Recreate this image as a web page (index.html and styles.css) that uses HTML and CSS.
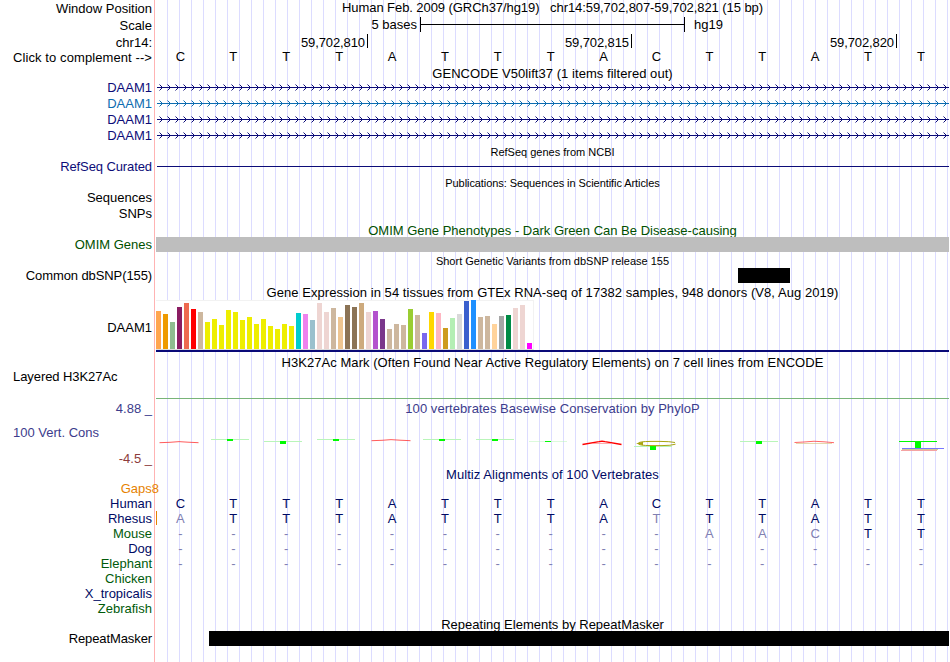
FILE: index.html
```html
<!DOCTYPE html>
<html lang="en">
<head>
<meta charset="utf-8">
<title>Genome Browser</title>
<link rel="stylesheet" href="styles.css">
</head>
<body>
<svg class="defs" width="0" height="0">
  <defs>
    <pattern id="chevDark" x="0" y="0" width="8" height="16" patternUnits="userSpaceOnUse">
      <path class="tip navy" d="M4 6h1v1h-1zM5 7h1v1h-1zM6 8h1v1h-1zM5 9h1v1h-1zM4 10h1v1h-1z"/>
      <path class="tail navy" d="M3 5h1v1h-1zM3 11h1v1h-1z"/>
    </pattern>
    <pattern id="chevBlue" x="0" y="0" width="8" height="16" patternUnits="userSpaceOnUse">
      <path class="tip azure" d="M4 6h1v1h-1zM5 7h1v1h-1zM6 8h1v1h-1zM5 9h1v1h-1zM4 10h1v1h-1z"/>
      <path class="tail azure" d="M3 5h1v1h-1zM3 11h1v1h-1z"/>
    </pattern>
  </defs>
</svg>
<main class="browser">
  <div class="row window"><div class="label">Window Position</div><div class="title tight">Human Feb. 2009 (GRCh37/hg19) &nbsp; chr14:59,702,807-59,702,821 (15 bp)</div></div>
  <div class="row scale"><div class="label">Scale</div>
    <div class="ruler"><span class="bases">5 bases</span><span class="bracket"></span><span>hg19</span></div></div>
  <div class="row coords"><div class="label">chr14:</div>
    <div class="ticks"><span>59,702,810</span><span>59,702,815</span><span>59,702,820</span></div></div>
  <div class="row seq"><div class="label wide">Click to complement --&gt;</div><div class="letters" data-seq="CTTTATTTACTTATT"></div></div>

  <div class="row head gencode"><div class="title loose">GENCODE V50lift37 (1 items filtered out)</div></div>
  <div class="row gene"><div class="label navy">DAAM1</div><svg width="793" height="16"><rect x="1" y="8" width="792" height="1" class="navy"/><rect x="1" width="792" height="16" fill="url(#chevDark)"/></svg></div>
  <div class="row gene"><div class="label azure">DAAM1</div><svg width="793" height="16"><rect x="1" y="8" width="792" height="1" class="azure"/><rect x="1" width="792" height="16" fill="url(#chevBlue)"/></svg></div>
  <div class="row gene"><div class="label navy">DAAM1</div><svg width="793" height="16"><rect x="1" y="8" width="792" height="1" class="navy"/><rect x="1" width="792" height="16" fill="url(#chevDark)"/></svg></div>
  <div class="row gene"><div class="label navy">DAAM1</div><svg width="793" height="16"><rect x="1" y="8" width="792" height="1" class="navy"/><rect x="1" width="792" height="16" fill="url(#chevDark)"/></svg></div>

  <div class="row head small"><div class="title">RefSeq genes from NCBI</div></div>
  <div class="row gene"><div class="label navy narrow">RefSeq Curated</div><div class="refline"></div></div>

  <div class="row head small pubs"><div class="title tight">Publications: Sequences in Scientific Articles</div></div>
  <div class="row empty"><div class="label">Sequences</div></div>
  <div class="row empty"><div class="label">SNPs</div></div>

  <div class="row head omim"><div class="title green">OMIM Gene Phenotypes - Dark Green Can Be Disease-causing</div></div>
  <div class="row band"><div class="label green">OMIM Genes</div><div class="omimbar"></div></div>

  <div class="row head small"><div class="title">Short Genetic Variants from dbSNP release 155</div></div>
  <div class="row gene"><div class="label narrow">Common dbSNP(155)</div><div class="snp"></div></div>

  <div class="row head gtexhead"><div class="title loose">Gene Expression in 54 tissues from GTEx RNA-seq of 17382 samples, 948 donors (V8, Aug 2019)</div></div>
  <div class="row gtex"><div class="label">DAAM1</div><div class="expr"><div class="bars" id="bars"></div></div></div>

  <div class="row head h3head"><div class="title loose">H3K27Ac Mark (Often Found Near Active Regulatory Elements) on 7 cell lines from ENCODE</div></div>
  <div class="row h3"><div class="label left tight">Layered H3K27Ac</div><div class="h3line"></div></div>

  <div class="row cons">
    <div class="label axis"><span class="indigo">4.88 _</span><span class="indigo left name">100 Vert. Cons</span><span class="maroon">-4.5 _</span></div>
    <div class="plot">
      <div class="title indigo loose">100 vertebrates Basewise Conservation by PhyloP</div>
      <svg width="793" height="51" viewBox="156 416 793 51">
        <g fill="none" stroke="#f33" stroke-width="1">
          <path d="M159.5 442.7L170 442.3Q179 441 188 442.2L198.500 442.700" stroke-opacity=".8"/>
          <path d="M371.500 440.700L382 440.300Q391 439 400 440.200L410.500 440.700" stroke-opacity=".8"/>
          <path d="M794.500 442.500L804 442Q814 440.600 824 441.800L834 442.700" stroke-opacity=".75"/>
          <path d="M796 443.500H832" stroke="#d9c88a" stroke-opacity=".7"/>
        </g>
        <path d="M582.500 444.500L599 441.600Q602 441 605 441.600L621.500 444.500" fill="none" stroke="#f00" stroke-width="1.400"/>
        <path d="M592 443.500H612" stroke="#f88" stroke-width=".7"/>
        <g fill="#b9f5b9">
          <rect x="211" y="439" width="38" height="1"/><rect x="264" y="441" width="38" height="1"/>
          <rect x="317" y="439" width="38" height="1"/><rect x="423" y="439" width="38" height="1"/>
          <rect x="476" y="439" width="38" height="1"/><rect x="529" y="441" width="38" height="1" opacity=".5"/>
          <rect x="740" y="441" width="38" height="1"/><rect x="634" y="446" width="38" height="1"/>
        </g>
        <g fill="#00fa00">
          <rect x="227" y="439" width="6" height="2"/><rect x="280" y="441" width="6" height="3"/>
          <rect x="333" y="439" width="6" height="2"/><rect x="439" y="439" width="6" height="2"/>
          <rect x="492" y="439" width="6" height="2"/><rect x="545" y="441" width="6" height="1"/>
          <rect x="650" y="446" width="6" height="4"/><rect x="756" y="441" width="6" height="3"/>
          <rect x="899" y="441" width="38" height="1"/><rect x="915" y="441" width="6" height="7"/>
        </g>
        <path d="M675 442.500Q670 441.400 660 441.400H651Q638 441.500 638 443.500Q638 445.500 651 445.600H662Q671 445.600 675.500 444.200" fill="none" stroke="#a8a410" stroke-width="1"/>
        <path d="M636 443.500L643 441.700V445.300Z" fill="#a8a410"/>
        <rect x="902" y="448" width="42" height="1" fill="#77f"/>
        <rect x="902" y="449" width="36" height="1" fill="#d5c894"/>
        <rect x="901" y="450" width="36" height="1" fill="#f5a3a3"/>
      </svg>
    </div>
  </div>

  <div class="row head multiz"><div class="title deep loose">Multiz Alignments of 100 Vertebrates</div></div>
  <div class="row align"><div class="label orange gaps">Gaps8</div></div>
  <div class="row align"><div class="label deep">Human</div><div class="letters deep" data-seq="CTTTATTTACTTATT"></div></div>
  <div class="row align"><div class="label deep">Rhesus</div><div class="letters deep insert" data-seq="aTTTATTTAtTTATT"></div></div>
  <div class="row align"><div class="label forest">Mouse</div><div class="letters deep" data-seq="----------aacTT"></div></div>
  <div class="row align"><div class="label deep">Dog</div><div class="letters deep" data-seq="---------------"></div></div>
  <div class="row align"><div class="label forest">Elephant</div><div class="letters deep" data-seq="---------------"></div></div>
  <div class="row align"><div class="label forest">Chicken</div></div>
  <div class="row align"><div class="label deep">X_tropicalis</div></div>
  <div class="row align"><div class="label forest">Zebrafish</div></div>

  <div class="row head rmhead"><div class="title">Repeating Elements by RepeatMasker</div></div>
  <div class="row band"><div class="label narrow">RepeatMasker</div><div class="repeat"></div></div>
</main>
<script src="tracks.js"></script>
</body>
</html>
```
FILE: styles.css
```css
body {
  margin: 0;
  background: #fff;
  color: #000;
  font: 13px/15px "Liberation Sans", Arial, sans-serif;
  overflow: hidden;
}
.defs { display: block; height: 0; }
.browser {
  width: 949px;
  height: 662px;
  background:
    linear-gradient(#ffb3b3, #ffb3b3) 154px 0 / 1px 100% no-repeat,
    repeating-linear-gradient(90deg, #dcdcff 0 1px, transparent 1px 12px) 167px 0 / 782px 100% no-repeat;
}
.row {
  display: grid;
  grid-template-columns: 152px 793px;
  column-gap: 4px;
  align-items: start;
  white-space: pre;
}
.label { grid-column: 1; text-align: right; }
.title { grid-column: 2; text-align: center; }
.left { text-align: left; padding-left: 13px; }
svg { display: block; }

/* letter fitting */
.tight { letter-spacing: -0.07px; }
.loose { letter-spacing: 0.05px; }
.narrow { letter-spacing: -0.1px; }
.wide { letter-spacing: 0.09px; }

/* track colours */
.navy { color: #0c0c78; fill: #0c0c78; }
.azure { color: #0c6cb0; fill: #0c6cb0; }
.tail { fill-opacity: .5; }
.green { color: #005000; }
.forest { color: #005a0a; }
.deep { color: #000a64; }
.indigo { color: #3c3c8c; }
.maroon { color: #8c3c3c; }
.orange { color: #e68200; }

/* position header */
.window { height: 17px; }
.window .label, .scale .label { padding-top: 1px; }
.scale { height: 18px; }
.ruler { display: flex; align-items: flex-start; }
.bases { width: 261px; text-align: right; }
.bracket {
  width: 263px;
  height: 15px;
  margin: 0 9px 0 3px;
  border: solid #000;
  border-width: 0 1px;
  background: linear-gradient(#000, #000) 0 7px / 100% 1px no-repeat;
}
.coords { height: 15px; }
.ticks { display: grid; grid-template-columns: 212px 264px 265px; margin-top: -1px; letter-spacing: -0.1px; }
.ticks span { height: 14px; padding: 1px 2px 0 0; border-right: 1px solid #000; text-align: right; box-sizing: border-box; }
.seq { height: 16px; }
.seq .letters { margin-top: -1px; }
.letters { display: grid; grid-template-columns: repeat(15, 52.9px); margin-left: -2px; text-align: center; }
.mismatch { color: #8080b2; }

/* track headings */
.head { height: 15px; }
.gencode { height: 13px; }
.small { font-size: 11px; padding-top: 2px; height: 13px; }
.pubs { height: 14px; }
.omim { padding-top: 1px; height: 14px; }
.gtexhead { padding-top: 2px; }
.h3head { padding-top: 3px; height: 14px; }
.multiz { height: 14px; }
.rmhead { padding-top: 1px; height: 14px; }

.gene { height: 16px; }
.gene .label { padding-top: 1px; }
.refline { height: 1px; margin: 8px 0 0 1px; background: #0c0c78; }
.empty { height: 16px; }
.band { height: 15px; }
.omimbar { height: 15px; background: #bebebe; }
.snp { width: 52px; height: 15px; margin: 1px 0 0 582px; background: #000; }
.repeat { height: 15px; margin-left: 53px; background: #000; }

/* expression bar graph */
.gtex { height: 52px; }
.gtex .label { padding-top: 20px; }
.expr { height: 50px; border-bottom: 2px solid #0a0a78; }
.bars {
  display: flex;
  align-items: flex-end;
  gap: 2px;
  width: 378px;
  height: 50px;
  box-sizing: border-box;
  border: solid #f2f2f2;
  border-width: 1px 1px 1px 0;
  border-bottom-color: #dcdcdc;
  background: #fff;
}
.bars i { width: 5px; flex: none; }

.h3 { height: 32px; }
.h3line { height: 1px; margin-top: 29px; background: #78b478; }

/* conservation */
.cons { height: 66px; }
.axis { display: flex; flex-direction: column; gap: 10px; }
.name { margin: -1px 0 1px; }
.plot { height: 66px; white-space: normal; }
.align { height: 15px; }
.gaps { margin-right: -7px; }
.insert { background: linear-gradient(#e68200, #e68200) 2px 0 / 1px 14px no-repeat; }
```
FILE: tracks.js
```js
// Base letters: lower case marks a mismatch with the reference, '-' a gap.
document.querySelectorAll('.letters').forEach(function (el) {
  el.dataset.seq.split('').forEach(function (c) {
    var s = document.createElement('span');
    s.textContent = c.toUpperCase();
    if (c === '-' || c !== c.toUpperCase()) s.className = 'mismatch';
    el.appendChild(s);
  });
});

// Expression level (pixels) and colour per tissue.
var levels = [38,35,27,42,46,40,37,27,30,24,39,37,29,32,25,30,23,20,25,23,36,35,29,46,37,41,32,44,
  42,46,37,38,30,20,25,24,40,34,16,37,36,21,31,35,48,49,32,33,25,33,34,41,44,6];
var y = '#eeee00', t = '#cdb79e', p = '#eed5d2';
var colors = ['#ffa54f','#ee9a00','#8fbc8f','#8b1c62','#ee6a50','#ff0000',t,y,y,y,y,y,y,y,y,y,y,y,y,y,
  '#00cdcd','#ee82ee','#9ac0cd',p,p,t,'#eec591','#8b7355','#8b7355','#cdaa7d',p,'#b452cd','#7a378b',
  t,t,t,'#9acd32',t,'#7a67ee','#ffd700','#ffb6c1','#cd9b1d','#b4eeb4','#d9d9d9','#3a5fcd','#1e90ff',
  t,t,'#ffd39b','#a6a6a6','#008b45',p,p,'#ff00ff'];
levels.forEach(function (h, i) {
  var b = document.createElement('i');
  b.style.height = h + 'px';
  b.style.background = colors[i];
  document.getElementById('bars').appendChild(b);
});
```
